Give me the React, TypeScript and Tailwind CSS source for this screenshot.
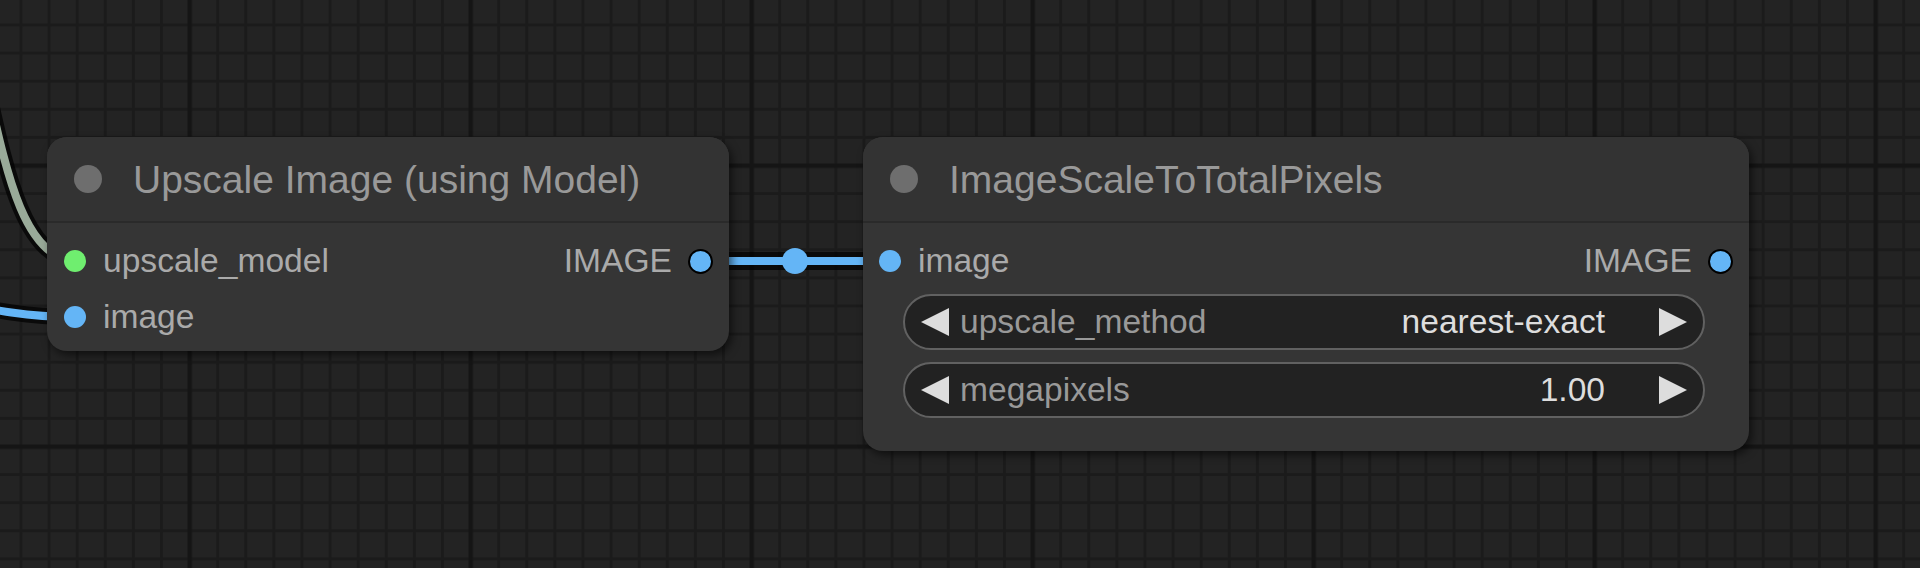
import React from "react";

const font = "font-['Liberation_Sans',Arial,sans-serif]";

function Arrow({ dir }: { dir: "left" | "right" }) {
  return (
    <svg width="28" height="28" viewBox="0 0 28 28" className="shrink-0">
      <polygon points={dir === "left" ? "28,0 0,14 28,28" : "0,0 28,14 0,28"} fill="#dddddd" />
    </svg>
  );
}

function InDot({ color }: { color: string }) {
  return <span className="w-[22px] h-[22px] rounded-full shrink-0" style={{ backgroundColor: color }} />;
}

function OutDot() {
  return <span className="w-[25px] h-[25px] rounded-full shrink-0 bg-[#64b5f6] border-[2.5px] border-black" />;
}

function Title({ text }: { text: string }) {
  return (
    <div className="h-[86px] flex items-center pl-[27px] bg-[#333333] rounded-t-[20px] border-b-2 border-[#2a2a2a]">
      <span className="w-[28px] h-[28px] rounded-full bg-[#6e6e6e] shrink-0" />
      <span className="ml-[31px] text-[39px] leading-none text-[#999999] whitespace-nowrap">{text}</span>
    </div>
  );
}

function Widget({ label, value }: { label: string; value: string }) {
  return (
    <div className="ml-[40px] mr-[44px] h-[56px] rounded-full border-2 border-[#616161] bg-[#222222] flex items-center pl-[16px] pr-[16px]">
      <Arrow dir="left" />
      <span className="ml-[11px] text-[33.6px] leading-none text-[#999999]">{label}</span>
      <span className="ml-auto text-[33.6px] leading-none text-[#dddddd]">{value}</span>
      <span className="ml-[54px] flex">
        <Arrow dir="right" />
      </span>
    </div>
  );
}

function Links() {
  return (
    <svg className="absolute inset-0 w-full h-full" width="1920" height="568">
      <defs>
        <pattern id="minor" width="28.1" height="28.1" patternUnits="userSpaceOnUse" x="19.5" y="23.5">
          <rect x="0" y="0" width="3" height="28.1" fill="#1b1b1b" />
          <rect x="0" y="0" width="28.1" height="3" fill="#1b1b1b" />
        </pattern>
        <pattern id="major" width="281" height="281" patternUnits="userSpaceOnUse" x="187.5" y="163.5">
          <rect x="0" y="0" width="4.5" height="281" fill="#151515" />
          <rect x="0" y="0" width="281" height="4.5" fill="#151515" />
        </pattern>
      </defs>
      <rect width="100%" height="100%" fill="#232323" />
      <rect width="100%" height="100%" fill="url(#minor)" />
      <rect width="100%" height="100%" fill="url(#major)" />

      {/* upscale_model link */}
      <path d="M -12 90 C 8 180, 25 255, 74 262" stroke="#000" strokeOpacity="0.7" strokeWidth="16" fill="none" />
      <path d="M -12 90 C 8 180, 25 255, 74 262" stroke="#99aa99" strokeWidth="8" fill="none" />

      {/* image link from the left */}
      <path d="M -150 289 C -60 289, -20 317, 74 317" stroke="#000" strokeOpacity="0.7" strokeWidth="16" fill="none" />
      <path d="M -150 289 C -60 289, -20 317, 74 317" stroke="#64b5f6" strokeWidth="8" fill="none" />

      {/* IMAGE -> image */}
      <path d="M 700 261 L 890 261" stroke="#000" strokeOpacity="0.7" strokeWidth="18" fill="none" />
      <path d="M 700 261 L 890 261" stroke="#64b5f6" strokeWidth="8" fill="none" />
      <circle cx="795" cy="261" r="13" fill="#64b5f6" />
    </svg>
  );
}

export default function App() {
  return (
    <div className={`relative w-full h-[568px] overflow-hidden bg-[#232323] ${font}`}>
      <Links />

      {/* Upscale Image (using Model) */}
      <div className="absolute left-[47px] top-[137px] w-[682px] rounded-[20px] bg-[#353535] shadow-[3px_4px_8px_rgba(0,0,0,0.55)]">
        <Title text="Upscale Image (using Model)" />
        <div className="pt-[10px] pb-[6px]">
          <div className="h-[56px] flex items-center pl-[17px] pr-[16px]">
            <InDot color="#6fee6f" />
            <span className="ml-[17px] text-[33.6px] leading-none text-[#aaaaaa]">upscale_model</span>
            <span className="ml-auto text-[33.6px] leading-none text-[#aaaaaa]">IMAGE</span>
            <span className="ml-[16px] flex">
              <OutDot />
            </span>
          </div>
          <div className="h-[56px] flex items-center pl-[17px] pr-[16px]">
            <InDot color="#64b5f6" />
            <span className="ml-[17px] text-[33.6px] leading-none text-[#aaaaaa]">image</span>
          </div>
        </div>
      </div>

      {/* ImageScaleToTotalPixels */}
      <div className="absolute left-[863px] top-[137px] w-[886px] rounded-[20px] bg-[#353535] shadow-[3px_4px_8px_rgba(0,0,0,0.55)]">
        <Title text="ImageScaleToTotalPixels" />
        <div className="pt-[10px] pb-[33px]">
          <div className="h-[56px] flex items-center pl-[16px] pr-[16px]">
            <InDot color="#64b5f6" />
            <span className="ml-[17px] text-[33.6px] leading-none text-[#aaaaaa]">image</span>
            <span className="ml-auto text-[33.6px] leading-none text-[#aaaaaa]">IMAGE</span>
            <span className="ml-[16px] flex">
              <OutDot />
            </span>
          </div>
          <div className="mt-[5px] flex flex-col gap-[12px]">
            <Widget label="upscale_method" value="nearest-exact" />
            <Widget label="megapixels" value="1.00" />
          </div>
        </div>
      </div>
    </div>
  );
}
